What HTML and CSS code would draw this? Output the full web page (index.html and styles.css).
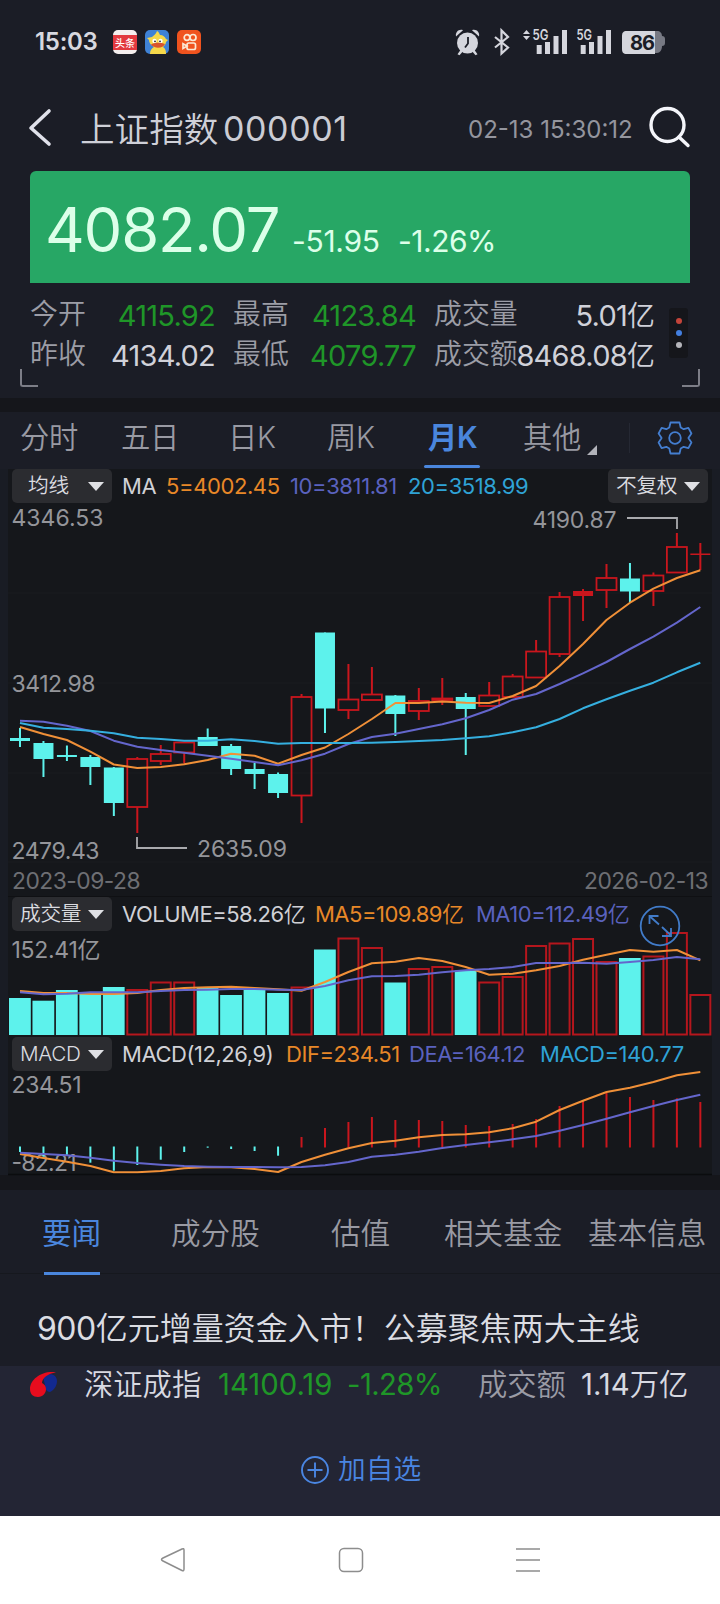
FILE: index.html
```html
<!DOCTYPE html>
<html lang="zh-CN">
<head>
<meta charset="utf-8">
<title>上证指数 000001</title>
<link rel="stylesheet" href="styles.css">
</head>
<body>
<div class="phone">
  <div class="status">
    <span class="clock">15:03</span>
    <svg class="apps" width="90" height="26" viewBox="0 0 90 26">
      <rect x="1" y="1" width="24" height="24" rx="5" fill="#f4eeee"/>
      <rect x="1" y="6" width="24" height="15" fill="#e2393f"/>
      <text x="13" y="17.500" font-size="10" fill="#fff" text-anchor="middle" font-weight="500">头条</text>
      <rect x="33" y="1" width="24" height="24" rx="5" fill="#3f82d6"/>
      <path d="M38 25c0-4 2-6 4-7-3-2-5-4-5-7l-2-2 5-1c2-2 4-3 5-6 2 1 2 2 3 4 3 0 5 2 6 4l2 1-2 2c0 2-2 4-3 5 2 1 3 3 3 7z" fill="#f6d84a"/>
      <circle cx="42.500" cy="12" r="2.200" fill="#fff"/><circle cx="48.500" cy="12" r="2.200" fill="#fff"/>
      <circle cx="43" cy="12.300" r=".9" fill="#222"/><circle cx="48" cy="12.300" r=".9" fill="#222"/>
      <path d="M39 15.500c3-2.200 10-2.200 14-.5-1.500 4.500-11 5-14 .5z" fill="#d9542c"/>
      <rect x="65" y="1" width="24" height="24" rx="5" fill="#f0531e"/>
      <g fill="none" stroke="#fbe9d5" stroke-width="1.700"><circle cx="75" cy="8.500" r="2.800"/><circle cx="81" cy="8.500" r="3"/><rect x="75" y="14" width="8.500" height="6.500" rx="1.800"/><path d="M75 17l-4-2.200v4.600z"/></g>
    </svg>
    <svg class="sys" width="214" height="28" viewBox="0 0 214 28">
      <g fill="#d5d6dd">
        <circle cx="12.500" cy="15" r="10.500"/>
        <path d="M1 8.500C0 4 4 .8 8 2.200z"/><path d="M24 8.500C25 4 21 .8 17 2.200z"/>
        <path d="M5.500 22l-3 4.200 2 1 3.500-4z"/><path d="M19.500 22l3 4.200-2 1-3.500-4z"/>
        <path d="M68 6l3.500-4L75 6z"/><path d="M68 8l3.500 4L75 8z"/>
        <rect x="81.700" y="17" width="5" height="9"/><rect x="90" y="14" width="5" height="12"/><rect x="98.500" y="8" width="5" height="18"/><rect x="107" y="2" width="5" height="24"/>
        <rect x="125.700" y="17" width="5" height="9"/><rect x="134" y="14" width="5" height="12"/><rect x="142.500" y="8" width="5" height="18"/><rect x="151" y="2" width="5" height="24"/>
      </g>
      <path d="M13 9v6.500l-3 4" fill="none" stroke="#1b1d26" stroke-width="1.800"/>
      <path d="M40 9l13 10.500-6.500 6V2.500L53 9 40 19.500" fill="none" stroke="#d5d6dd" stroke-width="2.200"/>
      <text x="77.500" y="12" font-size="14" font-weight="600" textLength="16" fill="#d5d6dd" lengthAdjust="spacingAndGlyphs">5G</text>
      <text x="121.500" y="12" font-size="14" font-weight="600" textLength="15.500" fill="#d5d6dd" lengthAdjust="spacingAndGlyphs">5G</text>
      <path d="M200 3h2c3 0 5 2 5 5 2 0 3 1 3 3v4c0 2-1 3-3 3 0 4-2 7-5 7h-2z" fill="#777983"/>
      <path d="M172 3h28v23h-28c-4 0-5-2-5-5V8c0-3 1-5 5-5z" fill="#d5d6dd"/>
      <text x="187.500" y="21.700" font-size="20" font-weight="700" textLength="25" text-anchor="middle" fill="#1b1d26">86</text>
    </svg>
  </div>

  <header class="title">
    <svg width="24" height="40" viewBox="0 0 24 40"><path d="M21 3L3 20l18 16" fill="none" stroke="#e0e1ea" stroke-width="3.600" stroke-linecap="round" stroke-linejoin="round"/></svg>
    <span class="name">上证指数</span><span class="code">000001</span>
    <span class="time">02-13 15:30:12</span>
    <svg class="search" width="44" height="44" viewBox="0 0 44 44"><g fill="none" stroke="#f4f5fa" stroke-width="3.400" stroke-linecap="round"><circle cx="19.500" cy="19" r="16.500"/><path d="M31 31l9 8.500"/></g></svg>
  </header>

  <section class="quote">
    <span class="price">4082.07</span><span class="chg">-51.95</span><span class="pct">-1.26%</span>
  </section>

  <section class="stats">
    <span class="lab">今开</span><span class="val down">4115.92</span><span class="lab">最高</span><span class="val down">4123.84</span><span class="lab">成交量</span><span class="val">5.01<i>亿</i></span>
    <span class="lab">昨收</span><span class="val">4134.02</span><span class="lab">最低</span><span class="val down">4079.77</span><span class="lab">成交额</span><span class="val">8468.08<i>亿</i></span>
    <div class="dots"><b class="r"></b><b class="b"></b><b class="w"></b></div>
    <div class="corner left"></div><div class="corner right"></div>
  </section>

  <div class="band"></div>

  <nav class="periods">
    <span>分时</span><span>五日</span><span>日K</span><span>周K</span><span class="on">月K</span><span class="more">其他</span>
    <svg class="gear" width="36" height="36" viewBox="0 0 36 36"><g fill="none" stroke="#447ed0" stroke-width="1.800" stroke-linejoin="round"><path d="M13.500 2.500h9l1.200 5 3 1.700 4.700-1.400 3 5.700-3 4.500 3 4.500-3 5.700-4.700-1.400-3 1.700-1.200 5h-9l-1.200-5-3-1.700-4.700 1.400-3-5.700 3-4.500-3-4.500 3-5.700 4.700 1.400 3-1.700z"/><circle cx="18" cy="18" r="5.800"/></g></svg>
  </nav>

  <main class="charts">
    <div class="legend ma"><span class="pick">均线</span><span class="white">MA</span><span class="orange">5=4002.45</span><span class="purple">10=3811.81</span><span class="blue">20=3518.99</span><span class="pick">不复权</span></div>
    <svg id="kline" width="704" height="360" viewBox="8 503 704 360"></svg>
    <div class="dates"><span>2023-09-28</span><span class="end">2026-02-13</span></div>
    <div class="legend vol"><span class="pick">成交量</span><span class="white">VOLUME=58.26<i>亿</i></span><span class="orange">MA5=109.89<i>亿</i></span><span class="purple">MA10=112.49<i>亿</i></span>
      <svg class="expand" width="42" height="42" viewBox="0 0 42 42"><g fill="none" stroke="#417bc8" stroke-width="1.800"><circle cx="21" cy="21" r="19.300"/><path d="M10.500 19v-8h9M11 11.500l9 8M23 22l8.500 8M32 23v8h-9"/></g></svg>
    </div>
    <svg id="volume" width="704" height="106" viewBox="8 931 704 106"></svg>
    <div class="legend macd"><span class="pick">MACD</span><span class="white">MACD(12,26,9)</span><span class="orange">DIF=234.51</span><span class="purple">DEA=164.12</span><span class="blue">MACD=140.77</span></div>
    <svg id="macd" width="704" height="105" viewBox="8 1071 704 105"></svg>
  </main>
  <div class="band low"></div>

  <nav class="info"><span class="on">要闻</span><span>成分股</span><span>估值</span><span>相关基金</span><span>基本信息</span></nav>
  <article class="news"><span class="num">900</span>亿元增量资金入市！公募聚焦两大主线</article>

  <footer class="dock">
    <div class="index">
      <svg width="30" height="28" viewBox="0 0 30 28"><path d="M14 6C20 1 28 3 28 10c0 5-3 9-7 11-3 0-5-3-5-7z" fill="#12298f"/><path d="M27 1.500C14-1 1 8 1 18c0 5 3 8 8 8s8-4 8-8c0-3-2-5-4-6 0-5 6-9.500 14-10.500z" fill="#e70c1e"/></svg>
      <span class="iname">深证成指</span><span class="ival">14100.19</span><span class="ipct">-1.28%</span><span class="ilab">成交额</span><span class="iamt">1.14<i>万亿</i></span>
    </div>
    <div class="add"><svg width="30" height="30" viewBox="0 0 30 30"><g fill="none" stroke="#4a86e2" stroke-width="1.900"><circle cx="15" cy="15" r="13"/><path d="M7.500 15h15M15 7.500v15"/></g></svg><span>加自选</span></div>
  </footer>

  <div class="sysnav">
    <svg width="720" height="88" viewBox="0 1516 720 88"><g fill="none" stroke="#8d8d8d" stroke-width="1.500" stroke-linejoin="round"><path d="M182 1549q2-1 2 1v19q0 2.500-2 1.500l-19-9.500q-3-1.500 0-3z"/><rect x="339.500" y="1548.500" width="23" height="23" rx="4.500"/><path d="M516 1549h24M516 1560h24M516 1571h24"/></g></svg>
  </div>
</div>
<script src="chart.js"></script>
</body>
</html>
```

FILE: styles.css
```css
* { box-sizing: border-box; }
body { margin: 0; background: #1b1d26; color: #d2d3da; font-family: Inter, "Noto Sans CJK SC", sans-serif; font-weight: 350; }
i { font-style: normal; font-weight: 350; }
svg { display: block; flex: none; overflow: visible; }
svg text { font-family: Inter, "Noto Sans CJK SC", sans-serif; }
span { white-space: nowrap; }
.phone { width: 720px; height: 1604px; overflow: hidden; line-height: 1; }

.status { height: 84px; padding: 0 0 1px 35px; display: flex; align-items: center; }
.clock { width: 77px; font-size: 24px; font-weight: 600; letter-spacing: -.3px; color: #d7d8df; }
.sys { margin-left: 253px; }

.title { height: 87px; padding: 1px 0 0 28px; display: flex; align-items: center; }
.name { width: 143px; margin-left: 28px; padding-top: 2px; font-size: 34.6px; color: #cfd0d8; }
.code { width: 130px; padding-top: 2px; font-size: 34px; font-weight: 400; letter-spacing: .6px; color: #cbccd4; }
.time { width: 180px; margin-left: 115px; padding-top: 3px; font-size: 24px; font-weight: 400; color: #94959e; }
.search { margin-left: 0; }

.quote { margin: 0 30px; height: 112px; padding: 28px 0 0 15px; background: #27a765; border-radius: 6px 6px 0 0; color: #dcffe9; display: flex; align-items: baseline; }
.price { width: 247px; font-size: 61.5px; font-weight: 400; letter-spacing: -1.2px; }
.chg { width: 106px; font-size: 30px; font-weight: 400; letter-spacing: -.3px; }
.pct { font-size: 30px; font-weight: 400; letter-spacing: -.5px; }

.stats { position: relative; height: 115px; padding: 12px 0 0 12px; display: grid; grid-template-columns: 88px 115px 73px 128px 94px 145px; grid-template-rows: 40px 40px; align-items: center; }
.lab { margin-left: 18px; font-size: 27.9px; color: #9c9da6; }
.val { font-size: 29px; font-weight: 400; justify-self: end; color: #d0d1d9; letter-spacing: -.75px; }
.val i { font-size: 28px; letter-spacing: 0; }
.val.down { color: #1f9628; }
.dots { position: absolute; left: 669px; top: 25px; width: 19px; height: 50px; background: #15161b; border-radius: 3px; display: flex; flex-direction: column; align-items: center; justify-content: center; gap: 6px; }
.dots b { width: 6px; height: 6px; border-radius: 50%; }
.r { background: #c4443a; } .b { background: #437fe0; } .w { background: #b5b5ba; }
.corner { position: absolute; top: 86px; width: 18px; height: 18px; border-bottom: 2px solid #7d7e87; }
.corner.left { left: 20px; border-left: 2px solid #7d7e87; border-bottom-left-radius: 3px; }
.corner.right { left: 682px; border-right: 2px solid #7d7e87; border-bottom-right-radius: 3px; }
.band { height: 14px; background: #15161b; }
.band.low { height: 15px; }

.periods { position: relative; height: 57px; padding: 0 0 5px 20px; display: grid; grid-template-columns: 101px 107px 99px 101px 95px 132px 40px; align-items: center; font-size: 29.3px; letter-spacing: -.2px; color: #999aa3; }
.periods .on { position: relative; color: #4a86dd; font-weight: 600; }
.periods .on::after { content: ""; position: absolute; left: -4px; top: 42px; width: 56px; height: 3px; border-radius: 2px; background: #4a86dd; }
.more { position: relative; border-right: 1px solid #252833; width: 107px; }
.more::after { content: ""; position: absolute; left: 64px; top: 22px; border-left: 10px solid transparent; border-bottom: 10px solid #b2b3ba; }
.gear { margin-left: 2px; }

.charts { background: #15171b; border-left: 8px solid #191c24; border-right: 8px solid #191c24; height: 706px; }
.legend { position: relative; height: 34px; padding-left: 4px; display: grid; align-items: center; font-size: 22px; font-weight: 400; letter-spacing: -.4px; }
.ma { grid-template-columns: 110px 44px 124px 118px 200px 100px; }
.vol { grid-template-columns: 110px 193px 161px 160px; letter-spacing: -.5px; }
.macd { grid-template-columns: 110px 164px 123px 131px 150px; height: 32px; margin-bottom: 2px; letter-spacing: -.45px; }
.pick { width: 100px; height: 34px; border-radius: 5px; background: #2b2c30; color: #dbdce0; font-size: 20.7px; font-weight: 350; letter-spacing: -.3px; display: flex; align-items: center; justify-content: space-between; padding: 0 8px; }
.ma .pick:first-child { padding-left: 16px; }
.pick::after { content: ""; border: 8px solid transparent; border-top: 9px solid #dfe0e4; border-bottom: 0; }
.white { color: #d0d1d6; } .orange { color: #e88828; } .purple { color: #5a62be; } .blue { color: #2fa3d6; }
.dates { height: 34px; padding: 3px 4px 0; display: flex; justify-content: space-between; align-items: center; font-size: 22.8px; font-weight: 400; letter-spacing: -.5px; color: #6e6f74; border-bottom: 1px solid #0f1013; }
.expand { position: absolute; left: 631px; top: 8px; z-index: 2; }

.info { height: 84px; padding: 29px 0 0 42px; display: grid; grid-template-columns: 129px 160px 113px 144px 130px; font-size: 29.6px; color: #999aa3; border-bottom: 1px solid #16181e; }
.info .on { position: relative; color: #4a86dd; font-weight: 400; }
.info .on::after { content: ""; position: absolute; left: 2px; top: 53px; width: 56px; height: 3px; background: #4a86dd; }
.news { height: 92px; padding: 39px 0 0 37px; font-size: 32px; color: #dcdde3; white-space: nowrap; }
.num { font-weight: 400; letter-spacing: -.5px; }

.dock { height: 150px; background: #232534; }
.index { height: 38px; padding: 0 0 1px 29px; display: grid; grid-template-columns: 55px 134px 129px 131px 103px 110px; align-items: center; font-size: 29.3px; color: #d8d9e1; }
.ival { color: #1f9628; font-weight: 400; }
.ipct { color: #1f9628; font-weight: 400; letter-spacing: -.6px; }
.ilab { color: #9a9ba5; }
.iamt { font-weight: 400; }
.add { height: 132px; padding-left: 300px; display: flex; align-items: center; gap: 8px; font-size: 27.7px; color: #4a86e2; }
.sysnav { height: 88px; background: #fff; }
```

FILE: chart.js
```js
const CYAN = '#5df2ec', RED = '#c9161d', ORANGE = '#f09038', PURPLE = '#6466cc', BLUE = '#35afdf';
const cx = i => 20 + 23.46 * i;
const line = (v, c) => `<polyline fill="none" stroke="${c}" stroke-width="2" stroke-linejoin="round" points="${v.map((y, i) => cx(i).toFixed(1) + ',' + y).join(' ')}"/>`;
const label = (x, y, w, t) => `<text x="${x}" y="${y}" textLength="${w}" font-size="23" font-weight="400" fill="#94959a">${t}</text>`;
const rule = y => `<path d="M8 ${y}H712" stroke="#1b1d21"/>`;

/* each candle: kind (1 hollow, 0 filled cyan, 2 filled red), body top, body bottom, wick top, wick bottom */
const candles = [
  [0,738,741,728,747],[0,743,759,741,777],[0,755,757,745.5,761],[0,757,767,755,785],[0,767.5,803,767,816],
  [1,759,807,757,833],[1,754,761,745,765],[1,742.5,752.5,742,763.5],[0,737,746,728.5,746],[0,746,769,744,775],
  [0,769,774,763,789],[0,774,793,772.5,798],[1,697,795.5,694,823],[0,632.5,708.5,632.5,733],[1,699.5,710,664,719],
  [1,694.5,700,667,700],[0,695.5,714,695,736],[1,701,711,688,720],[1,698.5,700,678,705],[0,697,709,693,755],
  [1,695.5,706,682,706],[1,676.5,697,674,697],[1,651.5,677.5,640,677],[1,597,654,592,657],[2,591,596,589,621],
  [1,578,590,564,608],[0,578.5,591.5,563,603],[1,575.5,591,572.5,606],[1,547,572.5,533,572],[2,553.5,555,543,570]];
const candle = ([kind, t, b, wt, wb], i) => {
  const x = cx(i), c = kind ? RED : CYAN;
  let s = `<path d="M${x} ${wt}V${kind === 1 ? t : b}M${x} ${b}V${wb}" stroke="${c}" stroke-width="2"/>`;
  if (kind === 1) s += `<rect x="${x - 10}" y="${t}" width="20" height="${b - t}" fill="none" stroke="${c}" stroke-width="1.8"/>`;
  else s += `<rect x="${x - 10}" y="${t}" width="20" height="${b - t}" fill="${c}"/>`;
  return s;
};
document.getElementById('kline').innerHTML = rule(593) + rule(683) + rule(773) + rule(862)
  + candles.map(candle).join('')
  + line([727,734,740,751.7,764.5,768,767,764.3,760,753.7,755.7,763.7,755,747.5,734,719,703,703,701.5,702.7,703,696,686,666,644,620,602.7,588.7,578,570.3], ORANGE)
  + line([720.7,721.7,725.7,731,740.7,746.7,750,752.7,755.7,758.7,762,765.3,760.3,753.7,744,737,733.7,729,724.3,718.3,710,699.7,694,684,673.3,662,649,636.7,622.7,607], PURPLE)
  + line([723,727.7,729,730.7,733.3,737.7,739,740.7,740.7,739.3,741,743.7,743,743,743,742.7,742,741,740,738.3,736.3,732.3,727.3,719,708.3,699.3,690.7,682.7,672.3,662.7], BLUE)
  + '<path d="M627 518H677V529M137 837V848H187" fill="none" stroke="#a9aaae" stroke-width="1.8"/>'
  + label(11.5, 526, 92, '4346.53') + label(11.5, 692, 84, '3412.98') + label(11.5, 859, 88, '2479.43')
  + label(532.5, 528, 84, '4190.87') + label(197, 857, 90, '2635.09');

const vols = [998,1000.7,990,993,987,990,982.5,982.5,988,995,990,993,987.5,949.5,938.5,948,982.5,969,967,970.5,982.5,977,946,943.5,939,962,958,956.5,933,995];
document.getElementById('volume').innerHTML = vols.map((t, i) => candles[i][0]
    ? `<rect x="${cx(i) - 10}" y="${t}" width="20" height="${1034.5 - t}" fill="none" stroke="#b5161d" stroke-width="2"/>`
    : `<rect x="${cx(i) - 11}" y="${t}" width="21.8" height="${1035 - t}" fill="${CYAN}"/>`).join('')
  + line([991,993,993,994,994,993,990,988,987.3,986.7,988,989.3,990.7,982,972,963.3,961.7,958,961,967,974.7,973.7,970.3,966,959.7,954.7,950,951.7,950,960.3], ORANGE)
  + line([992.3,994.3,993.7,992.3,992.3,992.3,991,990,989.7,989,989,989.7,990,986,980.3,976.3,976,974.7,972.3,970.3,969,967,963,963,962.7,963.7,962,960,957,959.3], PURPLE)
  + label(11.5, 958, 89, '152.41亿');

const hist = [1152,1156.7,1155.7,1162.7,1170.7,1165,1159.7,1152,1147.7,1149,1151,1155.7,1137,1128,1122,1117,1120,1120,1121,1125,1126,1124,1119,1106,1100,1093,1097,1100,1098.3,1102];
document.getElementById('macd').innerHTML = label(11.5, 1093, 70, '234.51') + label(11.5, 1171, 65, '-82.21')
  + hist.map((y, i) => `<path d="M${cx(i)} ${i < 12 ? 1146.5 : 1147.5}V${y}" stroke="${i < 12 ? CYAN : RED}" stroke-width="2"/>`).join('')
  + line([1154,1158,1161.7,1166,1172.3,1172.3,1171,1168.3,1167,1167.3,1169,1172,1162,1154.7,1148.3,1143,1140.7,1137.3,1135,1134.3,1132.3,1128.3,1121.7,1110,1100.7,1092,1087.7,1082,1075.3,1072], ORANGE)
  + line([1152.7,1154,1155.3,1157.7,1160.7,1163,1164.7,1166,1166.7,1167,1167,1167.3,1167,1165.3,1162,1156.7,1154.7,1151.7,1148,1145,1142.3,1139.3,1136,1130.7,1125,1118.7,1112.3,1106,1100,1094.7], PURPLE)
  + '<path d="M8 1174.5H712" stroke="#0b0c0e" stroke-width="1.5"/>';
```
